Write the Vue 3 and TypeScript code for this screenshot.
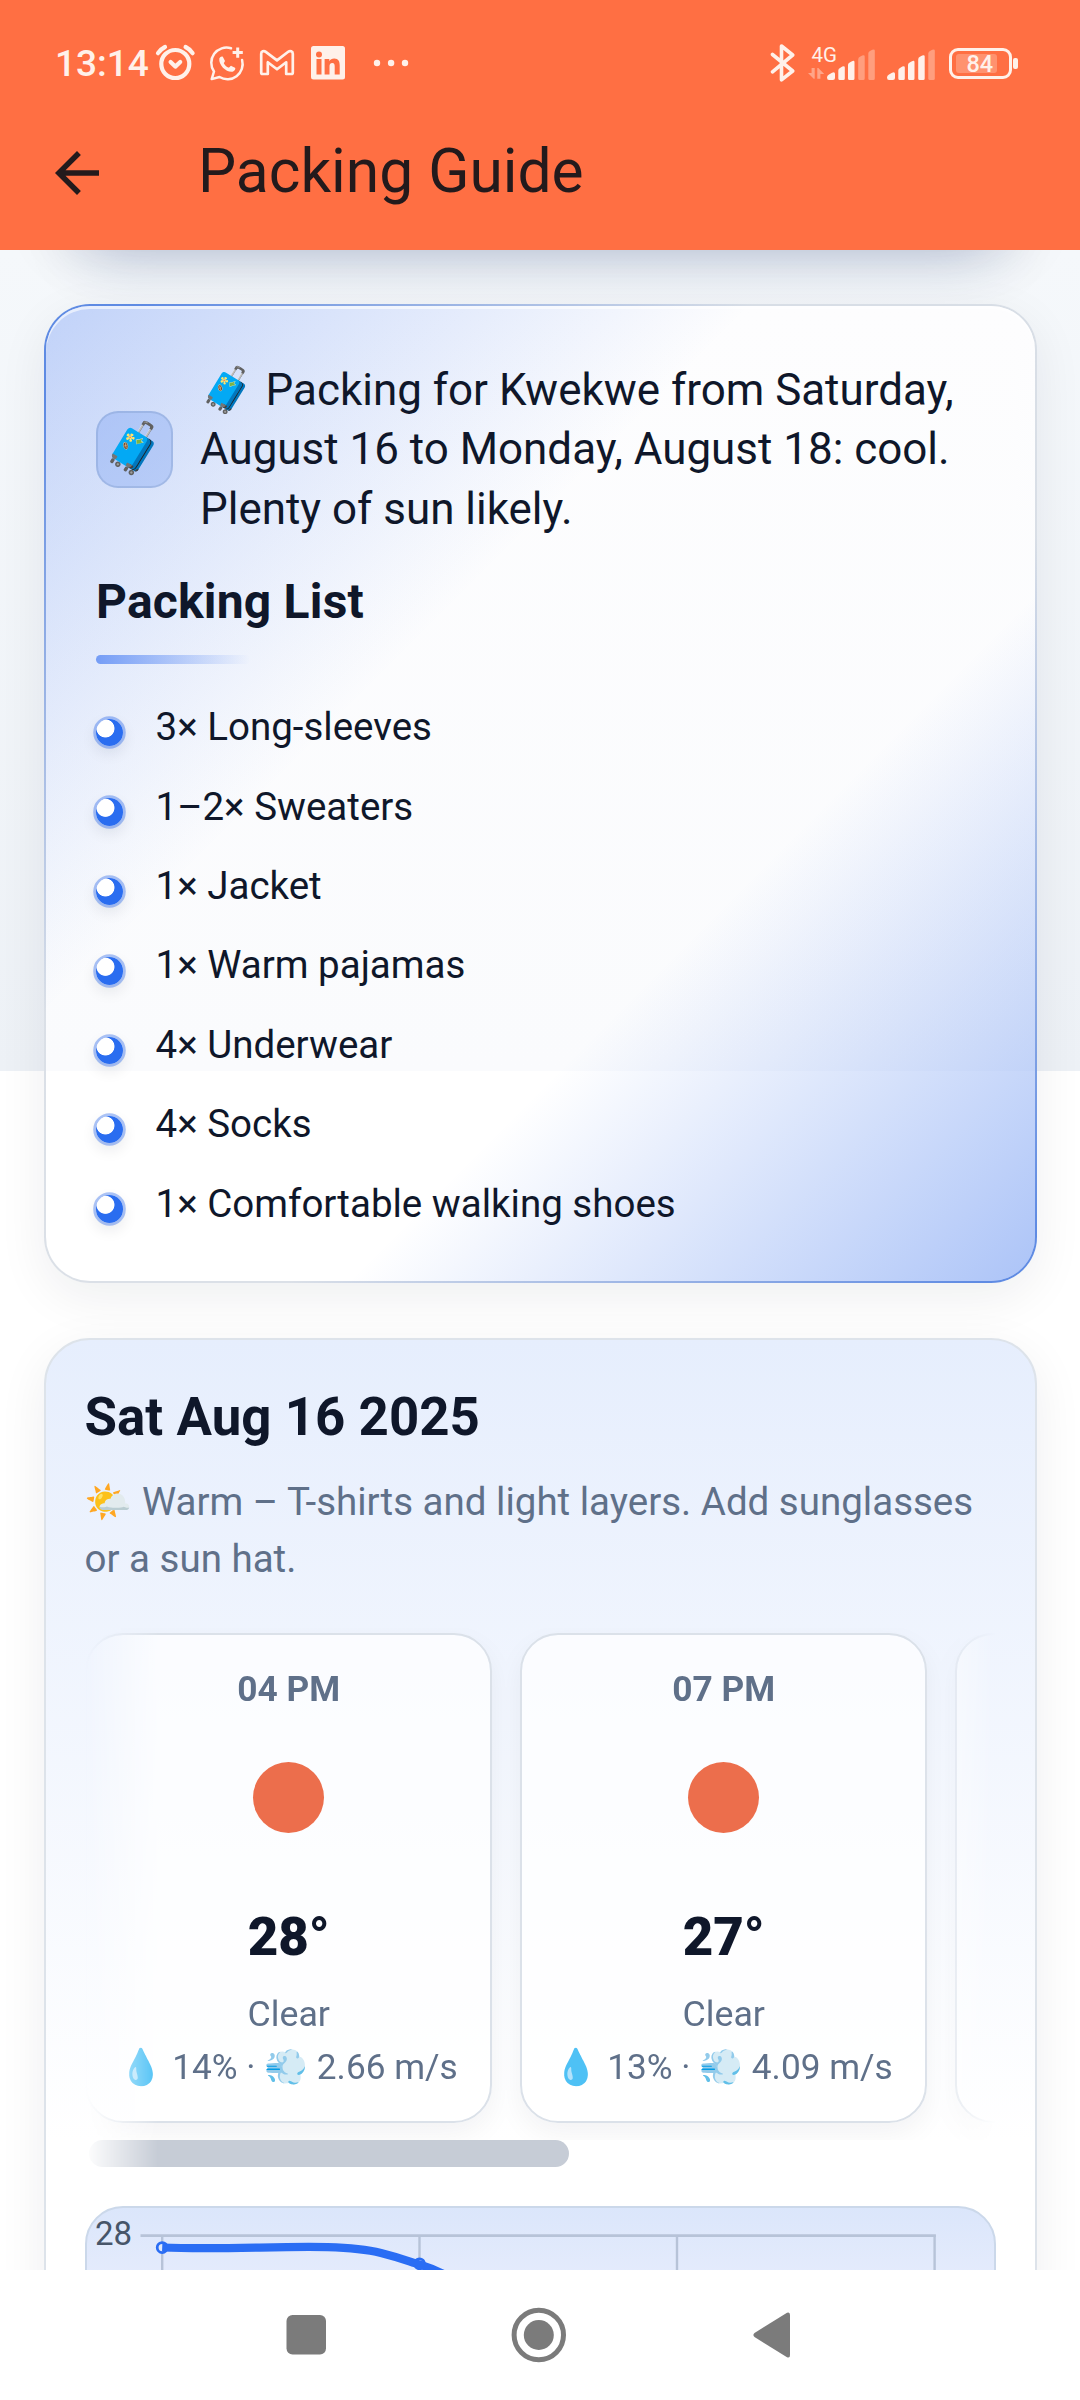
<script setup lang="ts">
interface Hour {
  time: string
  temp: string
  sky: string
  humidity: string
  wind: string
}

const packing: string[] = [
  '3× Long-sleeves',
  '1–2× Sweaters',
  '1× Jacket',
  '1× Warm pajamas',
  '4× Underwear',
  '4× Socks',
  '1× Comfortable walking shoes',
]

const hours: Hour[] = [
  { time: '04 PM', temp: '28°', sky: 'Clear', humidity: '14%', wind: '2.66 m/s' },
  { time: '07 PM', temp: '27°', sky: 'Clear', humidity: '13%', wind: '4.09 m/s' },
]
</script>

<template>
  <div class="phone">
    <header class="top">
      <div class="status">
        <span class="clock">13:14</span>
        <svg class="ic-alarm" width="42" height="40" viewBox="154 43 42 40" fill="none" stroke="#fff1ea" stroke-width="4.2" stroke-linecap="round">
          <circle cx="175.3" cy="64" r="14" />
          <path d="M170.6 62l4.7 4.6 4.9-4.6" stroke-linejoin="round" />
          <path d="M158 53.2q2.6-4 7-6.2M185.600 47q4.400 2.200 7 6.200" />
        </svg>
        <svg class="ic-wa" width="36" height="38" viewBox="209 44 36 38" fill="none" stroke="#fff1ea">
          <path d="M231 48.300a15.200 15.200 0 0 0-17 23.200l-2.300 7.600 7.800-2.100a15.200 15.200 0 0 0 22.600-17" stroke-width="2.500" stroke-linecap="round" stroke-linejoin="round" />
          <path d="M237.700 47.500v10.200M232.600 52.600h10.200" stroke-width="3" />
          <path d="M219.300 58.500c.8-1.800 2.400-2.600 3.500-1.800l2.100 4c.3 1.100-1.400 1.800-1 2.800 1 2 2.600 3.300 4.600 4.100 1.100.4 1.700-2 2.900-1.700l3.600 1.900c1 .9-.5 3.600-2.600 4-5.900.8-13.900-6.400-13.100-13.300z" fill="#fff1ea" stroke="none" />
        </svg>
        <svg class="ic-gm" width="36" height="28" viewBox="259 49 36 28" fill="none" stroke="#fff1ea" stroke-width="2.700" stroke-linejoin="round">
          <path d="M261.200 53.700c0-2.600 2.700-3.300 4.600-1.900l11.200 8.600 11.200-8.600c1.900-1.400 4.600-.7 4.600 1.900v18.800q0 1.500-1.500 1.500h-5.100V62.300l-9.200 7-9.200-7V74h-5.100q-1.500 0-1.500-1.500z" />
        </svg>
        <svg class="ic-li" width="34" height="34" viewBox="0 0 34 34">
          <rect width="34" height="33.500" rx="2.500" fill="#fff1ea" />
          <circle cx="8" cy="8.500" r="3" fill="#ff6f43" />
          <path d="M5.500 13h5v15.500h-5zM13.600 13h4.700v2.200c1-1.600 2.600-2.600 4.900-2.600 4.400 0 5.500 3 5.500 6.900v9h-5v-8.100c0-2-.4-3.500-2.400-3.500-2.100 0-2.800 1.500-2.800 3.500v8.100h-4.900z" fill="#ff6f43" />
        </svg>
        <svg class="ic-dots" width="36" height="8" viewBox="0 0 36 8" fill="#fff1ea">
          <circle cx="4" cy="4" r="3.200" /><circle cx="18.100" cy="4" r="3.200" /><circle cx="32" cy="4" r="3.200" />
        </svg>

        <svg class="ic-bt" width="26" height="40" viewBox="770 43 26 40" fill="none" stroke="#fff1ea" stroke-width="3.600" stroke-linejoin="round" stroke-linecap="round">
          <path d="M772.500 54.500L792.700 71l-11.200 8.800V46l11.200 9-20.200 16.800" />
        </svg>
        <div class="net">
          <span class="gen">4G</span>
          <svg width="70" height="36" viewBox="806 44 70 36" fill="#fff1ea">
            <path d="M814.700 67v10.800h-1l-5.700-5.800h3.600v-5zM817.300 77.800V67h1l5.900 6h-3.800v4.800z" fill-opacity=".42" />
            <path d="M827 76.500q0-2 2-3l3-1.700q3-1.300 3 1.200v4q0 2-2 2h-4q-2 0-2-2.500zM838.300 69.500q0-1.700 1.700-2.600l2.300-1.300q2.500-1 2.500 1v10.800q0 1.600-1.500 1.600h-3.500q-1.500 0-1.500-1.600zM848 64q0-1.700 1.700-2.600l2.300-1.200q2.500-1 2.500 1v16.200q0 1.600-1.500 1.600h-3.500q-1.500 0-1.500-1.600z" />
            <path d="M858.200 58.400q0-1.700 1.700-2.600l2.300-1.300q2.500-1 2.500 1v21.900q0 1.600-1.500 1.600h-3.500q-1.500 0-1.500-1.600zM868.300 52.600q0-1.700 1.700-2.600l2.300-1.200q2.500-1 2.500 1v27.600q0 1.600-1.500 1.600h-3.500q-1.500 0-1.500-1.600z" fill-opacity=".36" />
          </svg>
        </div>
        <svg class="ic-sig" width="50" height="36" viewBox="826 44 50 36" fill="#fff1ea">
          <path d="M827 76.500q0-2 2-3l3-1.700q3-1.300 3 1.200v4q0 2-2 2h-4q-2 0-2-2.500zM838.300 69.500q0-1.700 1.700-2.600l2.300-1.300q2.500-1 2.500 1v10.800q0 1.600-1.500 1.600h-3.500q-1.500 0-1.500-1.600zM848 64q0-1.700 1.700-2.600l2.300-1.200q2.500-1 2.500 1v16.200q0 1.600-1.500 1.600h-3.500q-1.500 0-1.500-1.600zM858.200 58.400q0-1.700 1.700-2.600l2.300-1.300q2.500-1 2.500 1v21.900q0 1.600-1.500 1.600h-3.500q-1.500 0-1.500-1.600z" />
          <path d="M868.300 52.600q0-1.700 1.700-2.600l2.300-1.200q2.500-1 2.500 1v27.600q0 1.600-1.500 1.600h-3.500q-1.500 0-1.500-1.600z" fill-opacity=".36" />
        </svg>
        <div class="batt"><span class="level">84</span></div>
        <i class="nub"></i>
      </div>
      <div class="bar">
        <svg width="66" height="66" viewBox="0 0 24 24" fill="#231a1c">
          <path d="M20 11H7.830l5.590-5.590L12 4l-8 8 8 8 1.410-1.410L7.830 13H20v-2z" />
        </svg>
        <h1>Packing Guide</h1>
      </div>
    </header>

    <main>
      <section class="prev"></section>

      <section class="card pack">
        <div class="summary">
          <div class="badge">🧳</div>
          <p>🧳 Packing for Kwekwe from Saturday, August 16 to Monday, August 18: cool. Plenty of sun likely.</p>
        </div>
        <h2>Packing List</h2>
        <div class="rule"></div>
        <ul>
          <li v-for="item in packing" :key="item"><i class="dot"></i><span>{{ item }}</span></li>
        </ul>
      </section>

      <section class="card day">
        <h3>Sat Aug 16 2025</h3>
        <p class="advice">🌤️ Warm – T-shirts and light layers. Add sunglasses or a sun hat.</p>
        <div class="fade">
          <div class="strip">
            <article v-for="h in hours" :key="h.time" class="hour">
              <div class="time">{{ h.time }}</div>
              <div class="sun"></div>
              <div class="temp">{{ h.temp }}</div>
              <div class="sky">{{ h.sky }}</div>
              <div class="meta">💧 {{ h.humidity }} · 💨 {{ h.wind }}</div>
            </article>
            <article class="hour"></article>
          </div>
          <div class="thumb"></div>
        </div>
        <div class="chart">
          <svg width="907" height="200" viewBox="87 2208 907 200" fill="none">
            <path d="M140.500 2235.500H935.900" stroke="#b7c3d8" stroke-width="2.750" />
            <path d="M162.200 2235.500V2408M419.500 2235.500V2408M677 2235.500V2408M934.600 2235.500V2408" stroke="#b7c3d8" stroke-width="2.400" />
            <g fill="#dfe8fb" stroke="#2a6df4" stroke-width="2.750">
              <circle cx="162.200" cy="2247.500" r="5" />
              <circle cx="419.500" cy="2263.800" r="5" />
            </g>
            <path d="M162.200 2247.500C248 2251 333 2241 381 2253C405 2259 412 2263 419.500 2264.500C440 2271 450 2277 470 2290" stroke="#2a6df4" stroke-width="8.250" />
          </svg>
          <span class="tick">28</span>
        </div>
      </section>
    </main>

    <nav>
      <svg width="1080" height="130" viewBox="0 2270 1080 130" fill="#7b7b7b">
        <rect x="286.500" y="2315" width="39.500" height="39.500" rx="6" />
        <circle cx="538.800" cy="2335" r="24.700" fill="none" stroke="#7b7b7b" stroke-width="5" />
        <circle cx="538.800" cy="2335" r="15" />
        <path d="M754.500 2333L787 2312.800Q790 2311.500 790 2315V2355Q790 2358.500 787 2357.200L754.500 2337Q752.300 2335 754.500 2333z" />
      </svg>
    </nav>
  </div>
</template>

<style>
body {
  margin: 0;
  background: #fff;
}
</style>

<style scoped>
.phone {
  width: 1080px;
  height: 2400px;
  overflow: hidden;
  background: #fff;
  font-family: Roboto, 'Noto Sans', 'Noto Color Emoji', sans-serif;
  color: #0f172a;
}
h1, h2, h3, p, ul {
  margin: 0;
  padding: 0;
}
svg {
  display: block;
  flex: none;
}
.top {
  height: 250px;
  background: #ff6f43;
}
.status {
  display: flex;
  align-items: center;
  height: 126px;
  padding-left: 55px;
  color: #fff1ea;
}
.clock {
  width: 99px;
  font-size: 37px;
  font-weight: 500;
  line-height: 44px;
  padding-top: 2px;
}
.ic-wa { margin-left: 13px; }
.ic-gm { margin-left: 14px; }
.ic-li { margin-left: 15.500px; }
.ic-dots { margin-left: 28.500px; }
.ic-bt { margin-left: 361px; }
.net {
  position: relative;
  margin-left: 10px;
}
.gen {
  position: absolute;
  left: 5.500px;
  top: -1.500px;
  font-size: 20.500px;
  line-height: 22px;
}
.ic-sig { margin-left: 10px; }
.batt {
  box-sizing: border-box;
  width: 63px;
  height: 31px;
  margin-left: 12.500px;
  border: 3.200px solid #fff1ea;
  border-radius: 9px;
  padding: 3px 4px;
}
.level {
  display: block;
  width: 41px;
  height: 19px;
  padding-left: 11px;
  box-sizing: border-box;
  border-radius: 3px;
  background: rgba(255, 241, 234, .27);
  font-size: 23.500px;
  font-weight: 500;
  line-height: 21px;
}
.nub {
  width: 4.500px;
  height: 11px;
  margin-left: 1.500px;
  border-radius: 2px;
  background: #fff1ea;
}
.bar {
  display: flex;
  align-items: center;
  height: 94px;
  padding-left: 44px;
}
h1 {
  margin-left: 88px;
  padding-bottom: 3px;
  font-size: 60.500px;
  font-weight: 400;
  line-height: 72px;
  color: #231a1c;
}
main {
  height: 2020px;
  overflow: hidden;
  background: linear-gradient(#f5f8fb, #edf1f6) no-repeat 0 0 / 100% 821px;
}
.prev {
  height: 400px;
  margin: -401px 43px 0 44px;
  border-radius: 44px;
  box-shadow: 0 46px 58px -46px rgba(15, 50, 120, .3), 0 14px 50px rgba(15, 23, 42, .06);
}
.card {
  box-sizing: border-box;
  width: 993px;
  margin: 55px 0 0 44px;
  border-radius: 46px;
  box-shadow: 0 14px 50px rgba(15, 23, 42, .07);
}
.pack {
  height: 979px;
  padding: 54.500px 50px 0;
  border: 2px solid transparent;
  background:
    linear-gradient(135deg, rgba(37, 99, 235, .28), rgba(37, 99, 235, 0) 36%, rgba(37, 99, 235, 0) 65%, rgba(37, 99, 235, .38)) padding-box,
    linear-gradient(#fdfdfe, #fafbfd 765px, #fff 765px) padding-box,
    linear-gradient(135deg, rgba(37, 99, 225, .68) 5%, rgba(37, 99, 225, 0) 36%, rgba(37, 99, 225, 0) 62%, rgba(37, 99, 225, .68) 97%) border-box,
    linear-gradient(#d8dee6, #dbe0e7) border-box;
  box-shadow: 0 14px 50px rgba(15, 23, 42, .07), inset 0 3px 0 rgba(255, 255, 255, .6);
}
.summary {
  display: flex;
  align-items: center;
}
.badge {
  box-sizing: border-box;
  width: 77px;
  height: 77px;
  flex: none;
  display: flex;
  justify-content: center;
  margin-top: -1px;
  border: 2.500px solid rgba(100, 130, 180, .25);
  border-radius: 22px;
  background: rgba(37, 99, 235, .19);
  font-size: 49.500px;
  line-height: 70px;
}
.summary p {
  margin-left: 27px;
  width: 790px;
  font-size: 43.950px;
  line-height: 59.500px;
}
h2 {
  margin-top: 33.500px;
  font-size: 48px;
  line-height: 58px;
  font-weight: 700;
  letter-spacing: .2px;
}
.rule {
  width: 154px;
  height: 9px;
  margin-top: 24px;
  border-radius: 5px;
  background: linear-gradient(90deg, #759df6, rgba(117, 157, 246, 0));
}
ul {
  margin-top: 23px;
  list-style: none;
}
li {
  display: flex;
  align-items: center;
  height: 79.400px;
  font-size: 38.500px;
}
li span {
  padding-top: 1px;
}
.dot {
  width: 27.500px;
  height: 27.500px;
  margin: 13px 32.500px 0 -.500px;
  border-radius: 50%;
  background: radial-gradient(circle at 35% 35%, #fff 8.600px, #2a6df0 9.400px);
  box-shadow: 0 0 0 2.750px rgba(37, 99, 235, .38), 0 6px 16px rgba(15, 23, 42, .11);
}
.day {
  height: 1200px;
  padding: 45.500px 39px 0 38.500px;
  border: 2px solid #dde3ea;
  background: linear-gradient(#e6eefd, #fff 800px);
}
h3 {
  font-size: 52.800px;
  line-height: 63px;
  font-weight: 700;
  letter-spacing: .05px;
}
.advice {
  margin-top: 24px;
  font-size: 38.500px;
  line-height: 57px;
  color: #5f7089;
}
.fade {
  margin-top: 41.500px;
  width: 911px;
  overflow: hidden;
  -webkit-mask-image: linear-gradient(90deg, transparent, #000 8%, #000 92%, transparent);
  mask-image: linear-gradient(90deg, transparent, #000 8%, #000 92%, transparent);
}
.strip {
  display: flex;
  gap: 28px;
  box-sizing: border-box;
  height: 512px;
  padding: 5px 0 0 .500px;
  overflow: hidden;
}
.hour {
  box-sizing: border-box;
  flex: none;
  width: 407px;
  height: 490px;
  padding: 32px 0 0 .500px;
  border: 2px solid #dbe1e9;
  border-radius: 38px;
  background: rgba(255, 255, 255, .72);
  box-shadow: 0 11px 28px rgba(15, 23, 42, .05);
  background-clip: padding-box;
  text-align: center;
  white-space: nowrap;
  color: #5f7089;
  font-size: 35.750px;
}
.time {
  font-weight: 700;
  font-size: 35.300px;
  line-height: 44px;
}
.sun {
  width: 71px;
  height: 71px;
  margin: 51px auto 0;
  border-radius: 50%;
  background: #ec6e4c;
}
.temp {
  margin-top: 72px;
  font-size: 52.800px;
  font-weight: 900;
  line-height: 64px;
  color: #0f172a;
}
.sky {
  margin-top: 21px;
  line-height: 49px;
}
.meta {
  margin-top: 3.500px;
  font-size: 35.200px;
  line-height: 49px;
}
.thumb {
  width: 480px;
  height: 27px;
  margin-left: 4px;
  border-radius: 14px;
  background: #c6ccd6;
}
.chart {
  position: relative;
  box-sizing: border-box;
  width: 911px;
  height: 330px;
  margin-top: 39px;
  border: 2px solid #cbd8ea;
  border-radius: 38px;
  background: linear-gradient(#dbe6fb, #e4ebfc 66px);
  overflow: hidden;
}
.tick {
  position: absolute;
  left: 8.500px;
  top: 7px;
  font-size: 33px;
  line-height: 38px;
  color: #475569;
}
nav {
  height: 130px;
  background: #fff;
}
</style>
